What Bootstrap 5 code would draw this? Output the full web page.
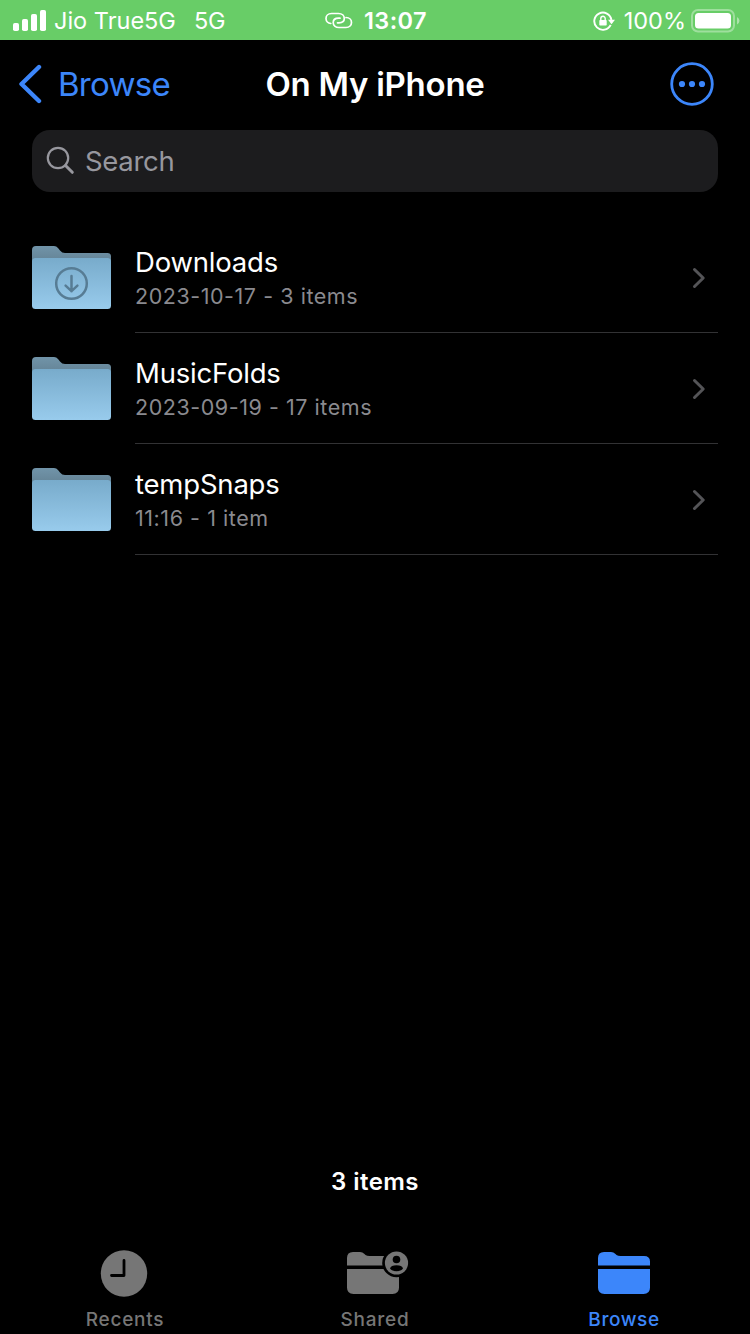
<!DOCTYPE html>
<html lang="en" data-bs-theme="dark">
<head>
<meta charset="utf-8">
<meta name="viewport" content="width=device-width, initial-scale=1">
<title>Files</title>
<link href="https://cdn.jsdelivr.net/npm/bootstrap@5.3.0/dist/css/bootstrap.min.css" rel="stylesheet">
<style>
  :root { --accent: #3c86fa; --dim: #8a8a8f; --tab-off: #767676; }
  body { font-family: Inter, "Liberation Sans", sans-serif; background: #000; color: #fff; }
  svg { display: block; flex: none; }
  a { color: inherit; text-decoration: none; }
  .screen { height: 1334px; }
  .status-bar { height: 40px; background: #68cd67; font-size: 23.5px; line-height: 40px; padding: 1px 10px 0 12px; }
  .carrier { margin-left: 7px; }
  .network { margin-left: 18px; letter-spacing: -.3px; }
  .clock { margin-left: 11px; letter-spacing: .45px; }
  .percent { margin-left: 9px; }
  .battery { margin-left: 5px; }
  .side { flex: 1 1 0; }
  .nav-top { height: 90px; padding: 0 18px 2px; font-size: 33px; line-height: 40px; }
  .accent { color: var(--accent); }
  .back-label { margin-left: 15px; letter-spacing: -.72px; }
  .nav-title { font-weight: 600; letter-spacing: -.25px; }
  .more { margin-right: 18.500px; }
  .search-field { height: 62px; margin: 0 32px 30px; padding: 0 14px; border-radius: 18px; background: #1c1c1e; color: #97979e; font-size: 27.5px; }
  .search-field svg { margin-bottom: 1px; }
  .search-label { margin-left: 10px; padding-top: 1px; letter-spacing: -.3px; }
  .file-list { margin: 0 32px; }
  .file-row { height: 111px; }
  .file-icon { margin-top: 24px; }
  .file-body { border-bottom: 1px solid #323234; margin-left: 24px; padding: 1px 12px 0 0; }
  .file-text { padding-bottom: 2px; }
  .file-name { font-size: 27.5px; line-height: 38px; letter-spacing: -.2px; }
  .file-meta { font-size: 21.5px; line-height: 30px; letter-spacing: .55px; color: var(--dim); }
  .count { font-size: 24px; line-height: 30px; font-weight: 600; letter-spacing: .45px; padding-bottom: 50px; }
  .tab { height: 87px; font-size: 19px; line-height: 24px; font-weight: 500; letter-spacing: .75px; color: var(--tab-off); padding-top: 2px; }
  .tab svg { margin-bottom: 11px; }
  .tab .nudge { margin-right: 2px; }
  .tab.on { color: var(--accent); letter-spacing: .6px; }
</style>
</head>
<body>
<svg width="0" height="0" class="position-absolute" aria-hidden="true">
  <defs>
    <linearGradient id="front" x1="0" y1="0" x2="0" y2="1"><stop offset="0" stop-color="#78abcb"/><stop offset="1" stop-color="#98cbec"/></linearGradient>
    <linearGradient id="back" x1="0" y1="0" x2="0" y2="1"><stop offset="0" stop-color="#7194a9"/><stop offset=".4" stop-color="#67879a"/></linearGradient>
    <symbol id="folder" viewBox="0 0 79 63">
      <path fill="url(#back)" d="M0 4Q0 0 4 0H22Q24.500 0 26 2L28 4.500Q30 7 33 7H75.500Q79 7 79 10.500V30H0Z"/>
      <path fill="url(#front)" d="M0 15.500Q0 12 3.500 12H75.500Q79 12 79 15.500V59.500Q79 63 75.500 63H3.500Q0 63 0 59.500Z"/>
    </symbol>
    <symbol id="chev" viewBox="0 0 14 22"><path d="M2.500 2.500L11.200 11L2.500 19.500" fill="none" stroke="#545457" stroke-width="3" stroke-linecap="round" stroke-linejoin="round"/></symbol>
  </defs>
</svg>
<div class="screen d-flex flex-column overflow-hidden">
  <header class="status-bar d-flex align-items-center">
    <div class="side d-flex align-items-center">
      <svg width="35" height="22" viewBox="0 0 35 22" fill="#fff"><rect x="1" y="13" width="6" height="8" rx="1.800"/><rect x="10" y="9" width="6" height="12" rx="1.800"/><rect x="19" y="4" width="6" height="17" rx="1.800"/><rect x="28" y="0" width="6" height="21" rx="1.800"/></svg>
      <span class="carrier">Jio True5G</span><span class="network">5G</span>
    </div>
    <div class="d-flex align-items-center">
      <svg width="28" height="18" viewBox="0 0 28 18" fill="none" stroke="#fff" stroke-width="1.700" stroke-linecap="round"><path d="M5.800 11.500C3 11.200 1 9 1 6.500S3 1.500 6.500 1.500H13.500C17 1.500 19.300 3.800 19.300 6.500S17 10.800 14 10.800H12.500"/><path d="M21 5.500C24.500 5.500 26.500 8 26.500 10.500S24.500 15.500 21 15.500H14C10.500 15.500 8.200 13.200 8.200 10.500S10.500 6.200 13.500 6.200H15"/></svg>
      <span class="clock fw-semibold">13:07</span>
    </div>
    <div class="side d-flex align-items-center justify-content-end">
      <svg width="22" height="20" viewBox="0 0 22 20"><path d="M17.700 13.800A8.600 8.600 0 1 1 18.400 9" fill="none" stroke="#fff" stroke-width="1.900"/><path d="M15 8.800H22L18.500 13.200Z" fill="#fff"/><rect x="6.300" y="9" width="7.400" height="5.500" rx=".8" fill="#fff"/><path d="M7.800 9.500V7.500a2.200 2.200 0 0 1 4.400 0V9.500" fill="none" stroke="#fff" stroke-width="1.400"/></svg>
      <span class="percent">100%</span>
      <svg class="battery" width="49" height="24" viewBox="0 0 49 24"><rect x="1" y="1" width="42" height="21.500" rx="6" fill="none" stroke="#fff" stroke-opacity=".36" stroke-width="2"/><rect x="4" y="4" width="36" height="15.500" rx="3.500" fill="#fff"/><path d="M46 8Q48.500 9.500 48.500 11.700T46 15.500Z" fill="#fff" fill-opacity=".45"/></svg>
    </div>
  </header>

  <nav class="nav-top d-flex align-items-center">
    <a href="#" class="side accent d-flex align-items-center">
      <svg width="25" height="40" viewBox="0 0 25 40"><path d="M21 3L3.500 20L21 37" fill="none" stroke="currentColor" stroke-width="4.400" stroke-linecap="round" stroke-linejoin="round"/></svg>
      <span class="back-label">Browse</span>
    </a>
    <span class="nav-title">On My iPhone</span>
    <div class="side accent d-flex justify-content-end">
      <svg class="more" width="44" height="44" viewBox="0 0 44 44" fill="currentColor"><circle cx="22" cy="22" r="20.300" fill="none" stroke="currentColor" stroke-width="2.800"/><circle cx="12" cy="22" r="3.100"/><circle cx="22" cy="22" r="3.100"/><circle cx="32" cy="22" r="3.100"/></svg>
    </div>
  </nav>

  <div class="search-field d-flex align-items-center">
    <svg width="29" height="29" viewBox="0 0 29 29" fill="none" stroke="currentColor" stroke-linecap="round"><circle cx="12" cy="12" r="10.200" stroke-width="2.200"/><path d="M19.500 19.500L26.300 26.300" stroke-width="3"/></svg>
    <span class="search-label">Search</span>
  </div>

  <main class="file-list flex-grow-1">
    <a href="#" class="file-row d-flex">
      <svg class="file-icon" width="79" height="63" viewBox="0 0 79 63"><use href="#folder"/><g fill="none" stroke="#577c94" stroke-width="2.500" stroke-linecap="round" stroke-linejoin="round"><circle cx="39.500" cy="37.500" r="15.300"/><path d="M39.500 30V45.200M33.600 39.600L39.500 45.200L45.400 39.600"/></g></svg>
      <div class="file-body flex-grow-1 d-flex align-items-center">
        <div class="file-text flex-grow-1"><div class="file-name">Downloads</div><div class="file-meta">2023-10-17 - 3 items</div></div>
        <svg width="14" height="22"><use href="#chev"/></svg>
      </div>
    </a>
    <a href="#" class="file-row d-flex">
      <svg class="file-icon" width="79" height="63"><use href="#folder"/></svg>
      <div class="file-body flex-grow-1 d-flex align-items-center">
        <div class="file-text flex-grow-1"><div class="file-name">MusicFolds</div><div class="file-meta">2023-09-19 - 17 items</div></div>
        <svg width="14" height="22"><use href="#chev"/></svg>
      </div>
    </a>
    <a href="#" class="file-row d-flex">
      <svg class="file-icon" width="79" height="63"><use href="#folder"/></svg>
      <div class="file-body flex-grow-1 d-flex align-items-center">
        <div class="file-text flex-grow-1"><div class="file-name">tempSnaps</div><div class="file-meta">11:16 - 1 item</div></div>
        <svg width="14" height="22"><use href="#chev"/></svg>
      </div>
    </a>
  </main>

  <div class="count text-center">3 items</div>
  <footer class="d-flex">
    <a href="#" class="side tab d-flex flex-column align-items-center">
      <svg class="nudge" width="48" height="48" viewBox="0 0 48 48"><circle cx="24" cy="24.500" r="23.200" fill="currentColor"/><path d="M24 11.500V26.500H11.500" fill="none" stroke="#000" stroke-width="2.800" stroke-linecap="round" stroke-linejoin="round"/></svg>
      <span>Recents</span>
    </a>
    <a href="#" class="side tab d-flex flex-column align-items-center">
      <svg width="68" height="48" viewBox="-2 0 68 48" fill="currentColor"><path d="M4 16.500V9Q4 3 10 3H17Q19.500 3 21.500 5L22.500 6Q24 7 26.500 7H50Q56 7 56 12.500V16.500Z"/><path d="M4 20H56V38.500Q56 45 49.500 45H10.500Q4 45 4 38.500Z"/><circle cx="53.500" cy="14" r="14.300" fill="#000"/><circle cx="53.500" cy="14" r="11.600"/><g fill="#000"><circle cx="53.500" cy="10.500" r="3.800"/><path d="M47 19.500Q48 16.300 53.500 16.300T60 19.500Q58 22.300 53.500 22.300T47 19.500Z"/></g></svg>
      <span>Shared</span>
    </a>
    <a href="#" class="side tab on d-flex flex-column align-items-center">
      <svg class="nudge" width="52" height="48" viewBox="0 0 52 48" fill="currentColor"><path d="M0 16.500V9Q0 3 6 3H13Q15.500 3 17.500 5L18.500 6Q20 7 22.500 7H46Q52 7 52 12.500V16.500Z"/><path d="M0 20H52V38.500Q52 45 45.500 45H6.500Q0 45 0 38.500Z"/></svg>
      <span class="nudge">Browse</span>
    </a>
  </footer>
</div>
<script src="https://cdn.jsdelivr.net/npm/bootstrap@5.3.0/dist/js/bootstrap.bundle.min.js"></script>
</body>
</html>
